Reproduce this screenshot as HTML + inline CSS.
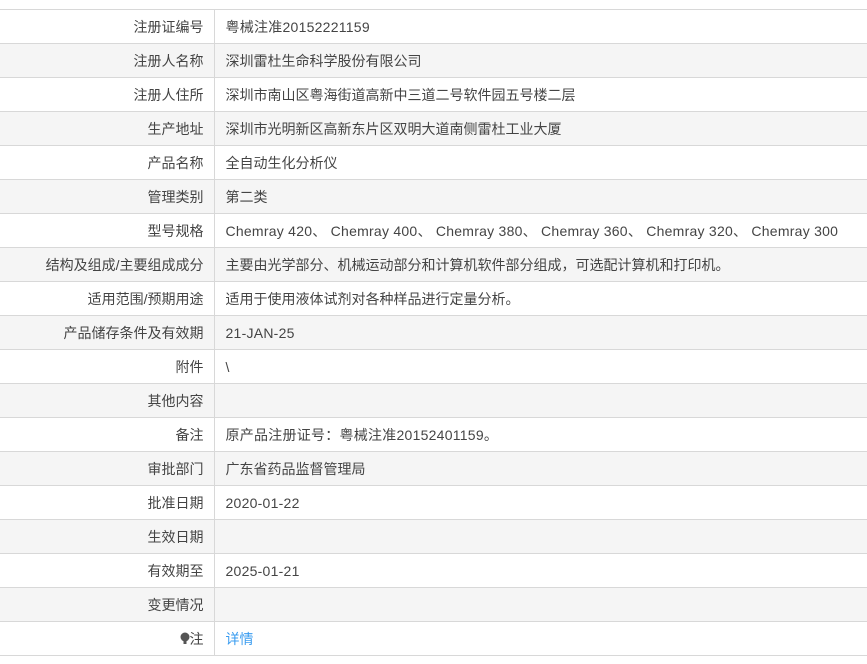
<!DOCTYPE html><html><head><meta charset="utf-8"><style>
body{margin:0;background:#fff;font-family:"Liberation Sans","Noto Sans CJK SC",sans-serif;font-size:14px;color:#444}
table{position:absolute;top:9px;left:0;width:867px;border-collapse:collapse}
td{height:33px;border-top:1px solid #d8d8d8;border-bottom:1px solid #d8d8d8;padding:1px 0 0 0;box-sizing:border-box;line-height:32px;white-space:nowrap}
tr{height:34px}
td.l{width:214px;text-align:right;padding-right:10px;border-right:1px solid #d8d8d8}
td.v{padding-left:11px}
tr:nth-child(even) td{background:#f5f5f5}
a{color:#3a9cf0;text-decoration:none}
.w{letter-spacing:0.25px}
</style></head><body><table>
<tr><td class="l">注册证编号</td><td class="v w">粤械注准20152221159</td></tr>
<tr><td class="l">注册人名称</td><td class="v">深圳雷杜生命科学股份有限公司</td></tr>
<tr><td class="l">注册人住所</td><td class="v">深圳市南山区粤海街道高新中三道二号软件园五号楼二层</td></tr>
<tr><td class="l">生产地址</td><td class="v">深圳市光明新区高新东片区双明大道南侧雷杜工业大厦</td></tr>
<tr><td class="l">产品名称</td><td class="v">全自动生化分析仪</td></tr>
<tr><td class="l">管理类别</td><td class="v">第二类</td></tr>
<tr><td class="l">型号规格</td><td class="v w">Chemray 420、 Chemray 400、 Chemray 380、 Chemray 360、 Chemray 320、 Chemray 300</td></tr>
<tr><td class="l">结构及组成/主要组成成分</td><td class="v">主要由光学部分、机械运动部分和计算机软件部分组成，可选配计算机和打印机。</td></tr>
<tr><td class="l">适用范围/预期用途</td><td class="v">适用于使用液体试剂对各种样品进行定量分析。</td></tr>
<tr><td class="l">产品储存条件及有效期</td><td class="v w">21-JAN-25</td></tr>
<tr><td class="l">附件</td><td class="v">\</td></tr>
<tr><td class="l">其他内容</td><td class="v"></td></tr>
<tr><td class="l">备注</td><td class="v w">原产品注册证号：粤械注准20152401159。</td></tr>
<tr><td class="l">审批部门</td><td class="v">广东省药品监督管理局</td></tr>
<tr><td class="l">批准日期</td><td class="v w">2020-01-22</td></tr>
<tr><td class="l">生效日期</td><td class="v"></td></tr>
<tr><td class="l">有效期至</td><td class="v w">2025-01-21</td></tr>
<tr><td class="l">变更情况</td><td class="v"></td></tr>
<tr><td class="l"><svg width="10" height="13" viewBox="0 0 10 13" style="vertical-align:-1px"><circle cx="5" cy="5" r="4.5" fill="#555"/><rect x="3.5" y="8.5" width="3" height="3.5" fill="#555"/></svg>注</td><td class="v"><a>详情</a></td></tr>
</table></body></html>
